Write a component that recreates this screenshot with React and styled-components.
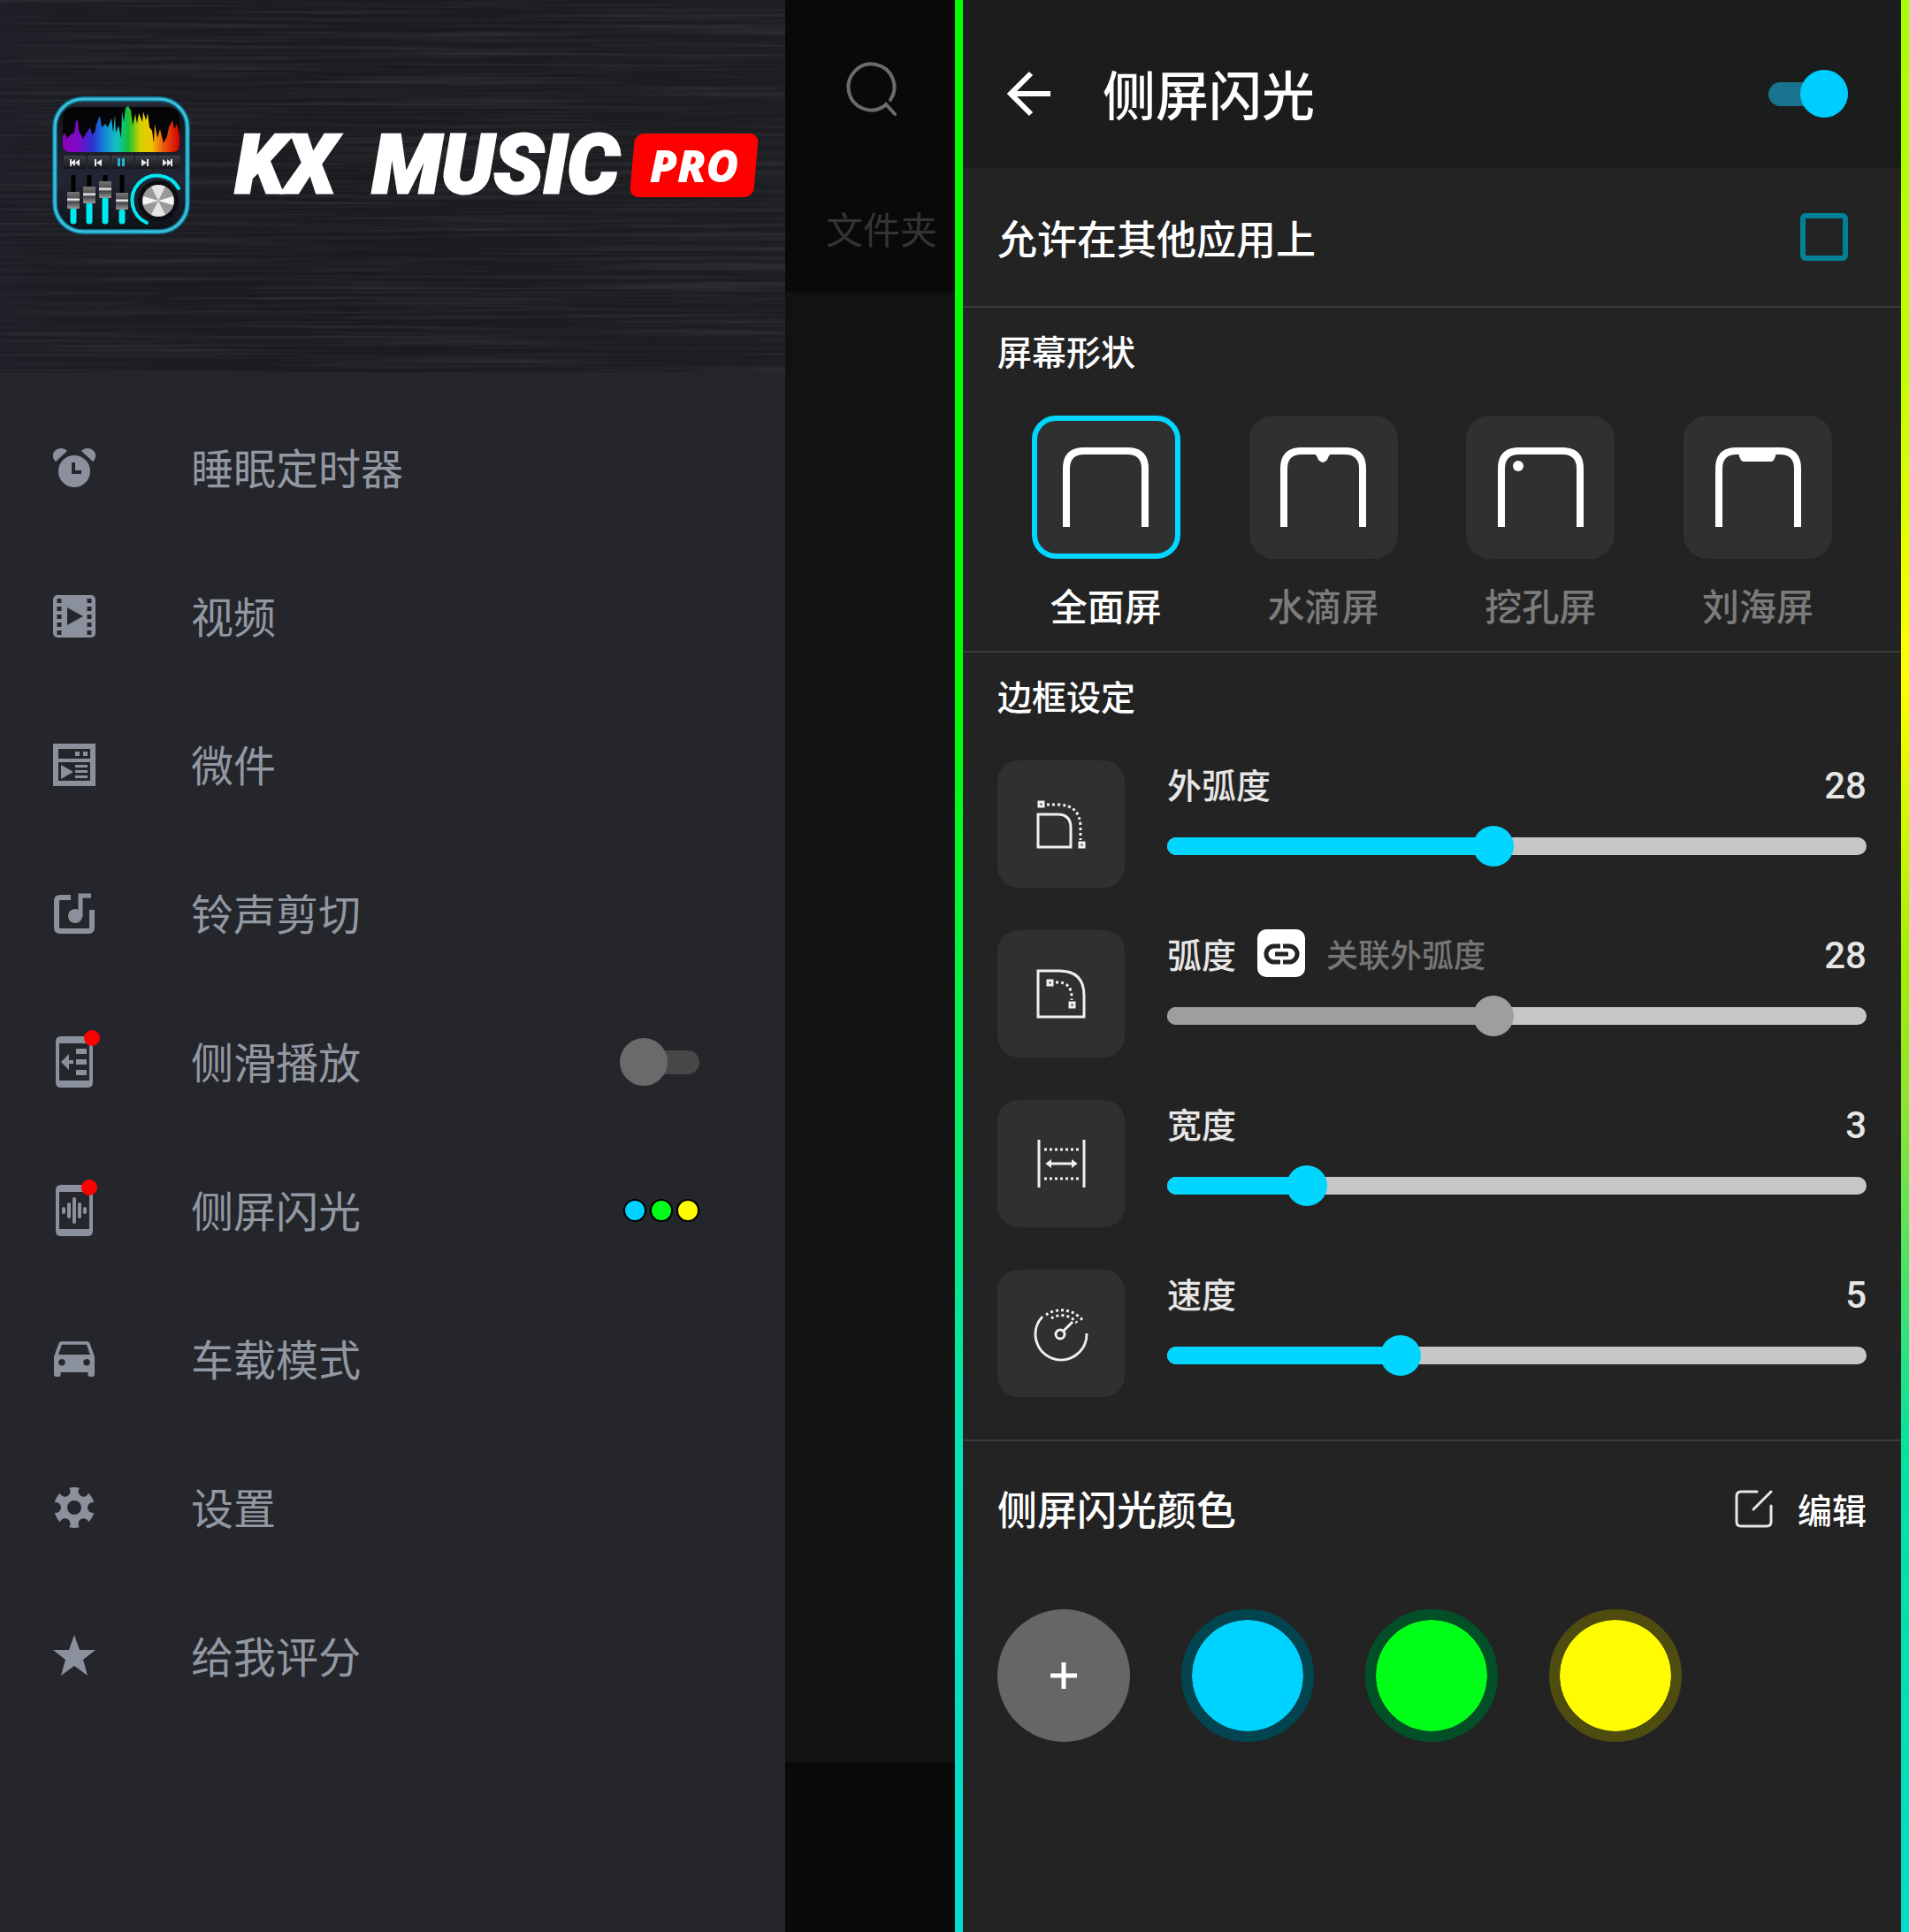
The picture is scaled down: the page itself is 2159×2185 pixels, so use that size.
import React, { useState } from 'react';
import styled, { createGlobalStyle } from 'styled-components';

const GlobalStyle = createGlobalStyle`
  * {
    box-sizing: border-box;
  }

  body {
    margin: 0;
    background-color: #232323;
    font-family: "Noto Sans CJK SC", sans-serif;
  }

  button {
    padding: 0;
    border: none;
    background: none;
    color: inherit;
    font: inherit;
    cursor: pointer;
  }

  a {
    color: inherit;
    text-decoration: none;
  }

  svg {
    display: block;
    overflow: visible;
  }
`;

const Page = styled.div`
  display: grid;
  grid-template-columns: 1080fr 1079fr;
  min-height: 100vh;
`;

const DrawerScreen = styled.div`
  display: grid;
  grid-template-columns: 37fr 8fr;
`;

/* ---------- drawer ---------- */

const Drawer = styled.aside`
  background-color: #25262b;
`;

const DrawerHeader = styled.header`
  position: relative;
  display: flex;
  align-items: center;
  height: 421px;
  padding: 0 24px 47px 60px;
  background: linear-gradient(90deg, #1d1d25, #1a1b1f 45%, #1d1e22);
  overflow: hidden;
`;

const Brushed = styled.svg`
  position: absolute;
  inset: 0;
  width: 100%;
  height: 100%;
`;

const Brand = styled.div`
  position: relative;
  display: flex;
  align-items: center;
  justify-content: space-between;
  flex: 1;
  margin: 0 9px 0 52px;
  color: #fff;
  font-style: italic;
  white-space: nowrap;
`;

const BrandName = styled.span`
  display: flex;
  gap: 41px;
  font-family: Roboto, sans-serif;
  font-size: 92px;
  font-weight: 900;
  line-height: 100px;
  -webkit-text-stroke: 3px #fff;
`;

const ProBadge = styled.span`
  position: relative;
  isolation: isolate;
  width: 140px;
  font-family: "Open Sans", sans-serif;
  font-size: 50px;
  font-weight: 800;
  line-height: 72px;
  text-align: center;

  &::before {
    content: "";
    position: absolute;
    inset: 0;
    z-index: -1;
    border-radius: 10px;
    background-color: #fe0000;
    transform: skewX(-5deg);
  }
`;

const LogoSvg = styled.svg`
  position: relative;
  flex: none;
  width: 154px;
  height: 154px;
`;

const Menu = styled.nav`
  display: flex;
  flex-direction: column;
  padding-top: 24px;
`;

const MenuRow = styled.a`
  display: flex;
  align-items: center;
  height: 168px;
  padding: 0 97px 0 60px;
  color: #9298a2;
  font-size: 48px;
  line-height: 64px;
  cursor: pointer;
`;

const MenuIcon = styled.span`
  display: flex;
  justify-content: center;
  width: 48px;
  margin-right: 108px;
  color: #8b919c;
`;

const MenuText = styled.span`
  flex: 1;
  padding-bottom: 4px;
`;

const Dots = styled.span`
  display: flex;
  gap: 4px;
`;

const Dot = styled.span`
  width: 26px;
  height: 26px;
  border: 2px solid #000;
  border-radius: 50%;
  background-color: ${(props) => props.$color};
`;

const Switch = styled.input`
  appearance: none;
  display: grid;
  align-items: center;
  width: 90px;
  height: 54px;
  margin: 0;
  cursor: pointer;

  &::before,
  &::after {
    content: "";
    grid-area: 1 / 1;
  }

  &::before {
    height: 27px;
    border-radius: 14px;
    background-color: #474747;
  }

  &::after {
    width: 54px;
    height: 54px;
    border-radius: 50%;
    background-color: #6a6a6a;
  }

  &:checked::before {
    background-color: #1b748f;
  }

  &:checked::after {
    justify-self: end;
    background-color: #00cdff;
  }
`;

/* ---------- dimmed home screen behind the drawer ---------- */

const Home = styled.main`
  display: flex;
  flex-direction: column;
  background-color: #101312;
  overflow: hidden;
`;

const HomeTop = styled.div`
  display: flex;
  flex-direction: column;
  align-items: center;
  justify-content: space-between;
  height: 331px;
  padding: 74px 0 48px;
  background-color: #090909;
`;

const HomeTab = styled.a`
  align-self: flex-end;
  margin-right: 20px;
  color: #333436;
  font-size: 42px;
  line-height: 50px;
  white-space: nowrap;
`;

const HomePlayer = styled.div`
  height: 192px;
  margin-top: auto;
  background-color: #090909;
`;

/* ---------- edge lighting screen ---------- */

const EdgeFrame = styled.div`
  padding: 0 9px;
  background:
    linear-gradient(#00ff00 36%, #00e5b8 75%, #00dcd0) left / 9px 100% no-repeat,
    linear-gradient(#a4ff00, #c4ff00 20%, #ffff00 35%, #a0f000 50%, #8de52e 57%, #00e3a0 75%, #00dcc8) right / 9px 100% no-repeat;
`;

const Settings = styled.main`
  min-height: 100%;
  background-color: #232323;
  color: #fff;
  font-weight: 500;
`;

const Toolbar = styled.header`
  display: flex;
  align-items: center;
  height: 190px;
  padding: 22px 60px 0 50px;
  background-color: #1b1d1c;
`;

const Title = styled.h1`
  flex: 1;
  margin: 0 0 0 58px;
  padding-bottom: 2px;
  font-size: 60px;
  font-weight: 500;
  line-height: 80px;
`;

const AllowRow = styled.label`
  display: flex;
  align-items: center;
  justify-content: space-between;
  height: 158px;
  padding: 0 60px 0 39px;
  border-bottom: 2px solid #3a3a3a;
  font-size: 45px;
`;

const Tick = styled.input`
  appearance: none;
  width: 54px;
  height: 54px;
  margin: 0;
  border: 6px solid #018096;
  border-radius: 6px;

  &:checked {
    background-color: #018096;
  }
`;

const Section = styled.section`
  padding: 20px 39px ${(props) => props.$bottom}px;
  border-bottom: 2px solid #3a3a3a;
`;

const SectionTitle = styled.h2`
  margin: 0 0 46px;
  font-size: 39px;
  font-weight: 500;
  line-height: 56px;
`;

const Shapes = styled.div`
  display: grid;
  grid-template-columns: repeat(4, 1fr);
`;

const ShapeButton = styled.button`
  display: flex;
  flex-direction: column;
  align-items: center;
  gap: 27px;
  color: ${(props) => (props.$active ? '#fff' : '#7b7b7b')};
  font-size: 42px;
  line-height: 50px;
`;

const ShapeTile = styled.span`
  display: flex;
  align-items: center;
  justify-content: center;
  width: 168px;
  height: 162px;
  border: 6px solid ${(props) => (props.$active ? '#00d6ff' : '#303030')};
  border-radius: 27px;
  background-color: #303030;
  color: #fff;
`;

const Rows = styled.div`
  display: flex;
  flex-direction: column;
  gap: 48px;
`;

const Row = styled.div`
  display: flex;
  gap: 48px;
`;

const RowTile = styled.span`
  flex: none;
  width: 144px;
  height: 144px;
  border-radius: 24px;
  background-color: #303030;
`;

const RowBody = styled.div`
  flex: 1;
  display: flex;
  flex-direction: column;
  gap: 22px;
`;

const RowHead = styled.div`
  display: flex;
  align-items: center;
  gap: 24px;
  height: 52px;
  color: #e6e6e6;
  font-size: 39px;
`;

const LinkButton = styled.button`
  width: 54px;
  height: 54px;
  border-radius: 10px;
  background-color: #fff;
  color: #232323;
`;

const LinkText = styled.span`
  color: #767676;
  font-size: 36px;
`;

const Value = styled.output`
  margin-left: auto;
  padding-top: 4px;
  font-family: Roboto, sans-serif;
  font-size: 42px;
`;

const SliderBox = styled.div`
  display: grid;
  align-items: center;
  height: 46px;
`;

const Track = styled.div`
  grid-area: 1 / 1;
  height: 20px;
  border-radius: 10px;
  background-color: #c7c7c7;
  overflow: hidden;
`;

const Fill = styled.div`
  height: 100%;
  background-color: ${(props) => props.$color};
`;

const Range = styled.input`
  appearance: none;
  grid-area: 1 / 1;
  height: 46px;
  margin: 0 -23px;
  background: transparent;

  &::-webkit-slider-thumb {
    appearance: none;
    width: 46px;
    height: 46px;
    border-radius: 50%;
    background-color: ${(props) => props.$color};
  }
`;

const Colors = styled.section`
  padding: 48px 39px;
`;

const ColorsHead = styled.div`
  display: flex;
  align-items: center;
  justify-content: space-between;
  margin-bottom: 86px;
  line-height: 56px;
`;

const ColorsTitle = styled.h2`
  margin: 0;
  font-size: 45px;
  font-weight: 500;
`;

const EditButton = styled.button`
  display: flex;
  align-items: center;
  gap: 28px;
  font-size: 39px;
`;

const Swatches = styled.div`
  display: flex;
  gap: 58px;
`;

const Swatch = styled.button`
  width: 150px;
  height: 150px;
  border: 12px solid ${(props) => props.$ring};
  border-radius: 50%;
  background-color: ${(props) => props.$color};
  background-clip: padding-box;
`;

const AddButton = styled.button`
  display: flex;
  align-items: center;
  justify-content: center;
  width: 150px;
  height: 150px;
  border-radius: 50%;
  background-color: #666;
`;

/* ---------- drawings ---------- */

const faders = [
  { x: 23, cap: 107, tail: 128 },
  { x: 41, cap: 101, tail: 122 },
  { x: 59, cap: 95, tail: 116 },
  { x: 78, cap: 108, tail: 130 },
];

const Logo = () => (
  <LogoSvg viewBox="0 0 154 154" role="img" aria-label="KX Music">
    <defs>
      <linearGradient id="spectrum">
        <stop offset="0" stopColor="#8a00b8" />
        <stop offset="0.14" stopColor="#7d0cc8" />
        <stop offset="0.25" stopColor="#2c2fd0" />
        <stop offset="0.36" stopColor="#1487d8" />
        <stop offset="0.46" stopColor="#12c2c4" />
        <stop offset="0.56" stopColor="#10c238" />
        <stop offset="0.66" stopColor="#d2d000" />
        <stop offset="0.76" stopColor="#f0c800" />
        <stop offset="0.86" stopColor="#ee5a10" />
        <stop offset="1" stopColor="#d00000" />
      </linearGradient>
      <linearGradient id="cap" x2="0" y2="1">
        <stop offset="0" stopColor="#777" />
        <stop offset="0.35" stopColor="#555" />
        <stop offset="0.45" stopColor="#f2f2f2" />
        <stop offset="0.6" stopColor="#444" />
        <stop offset="1" stopColor="#999" />
      </linearGradient>
      <linearGradient id="face" x2="0" y2="1">
        <stop offset="0" stopColor="#2f3644" />
        <stop offset="0.1" stopColor="#14161d" />
        <stop offset="0.6" stopColor="#232634" />
        <stop offset="1" stopColor="#0e1117" />
      </linearGradient>
      <linearGradient id="key" x2="0" y2="1">
        <stop offset="0" stopColor="#3c3f46" />
        <stop offset="1" stopColor="#15171b" />
      </linearGradient>
    </defs>
    <rect x="2" y="2" width="150" height="150" rx="32" fill="url(#face)" stroke="#0c6f88" strokeWidth="6" />
    <rect x="2" y="2" width="150" height="150" rx="32" fill="none" stroke="#3dbfdc" strokeWidth="3" />
    <path d="M11 25Q11 11 25 11H129Q143 11 143 25V54Q143 62 135 62H19Q11 62 11 54Z" fill="#050507" />
    <path
      d="M11 44L13 40L16 47L20 42L24 40L26 27L28 26L29 38L34 47L38 40L42 34L44 42L47 40L49 30L53 21L55 34L59 30L62 34L66 24L68 40L70 20L71 40L74 32L77 46L78 16L80 28L82 12L85 10L88 15L90 32L93 19L95 30L97 18L101 28L102 16L105 26L107 18L109 34L112 38L114 52L115 30L118 46L121 36L125 52L129 44L131 34L135 26L137 36L140 30L143 42V54Q143 62 135 62H19Q11 62 11 54Z"
      fill="url(#spectrum)"
    />
    {[12, 39, 66, 93, 119].map((x) => (
      <rect key={x} x={x} y="66" width="25" height="15" fill="url(#key)" />
    ))}
    <path d="M19 70h2v8h-2zM30 70v8l-5-4v4l-5-4l5-4v4zM47 70h2v8h-2zM55 70v8l-6-4zM100 70l6 4l-6 4zM106 70h2v8h-2zM124 70l5 4v-4l5 4l-5 4v-4l-5 4zM133 70h2v8h-2z" fill="#e8e8e8" />
    <path d="M73 69h3v9h-3zM78 69h3v9h-3z" fill="#22b7d0" />
    {faders.map((f) => (
      <g key={f.x}>
        <path d={`M${f.x} 88V${f.cap}`} stroke="#000" strokeWidth="5" />
        <path d={`M${f.x} ${f.tail}V140`} stroke="#00e8f0" strokeWidth="7" strokeLinecap="round" />
        <rect x={f.x - 7} y={f.cap} width="14" height="19" rx="1" fill="url(#cap)" />
      </g>
    ))}
    <circle cx="119" cy="117" r="23" fill="#0b0d12" />
    <path d="M106 142A28 28 0 1 1 142 103" fill="none" stroke="#00e8f0" strokeWidth="4" strokeLinecap="round" />
    <circle cx="119" cy="117" r="18" fill="#9a9a9a" />
    <path d="M119 117L111 101A18 18 0 0 1 127 101ZM119 117L111 133A18 18 0 0 0 127 133Z" fill="#e4e4e4" />
    <path d="M119 117L102 112A18 18 0 0 0 102 122ZM119 117L136 112A18 18 0 0 1 136 122Z" fill="#f4f4f4" />
  </LogoSvg>
);

const ClockIcon = () => (
  <svg width="48" height="44" viewBox="0 0 48 44" fill="currentColor">
    <path d="M3 15C-1 11 -1 6 2 3C6 -1 12 -1 16 3ZM45 15C49 11 49 6 46 3C42 -1 36 -1 32 3Z" />
    <circle cx="24" cy="26" r="18" />
    <path d="M23 16V27H32" fill="none" stroke="#25262b" strokeWidth="4" />
  </svg>
);

const FilmIcon = () => (
  <svg width="48" height="48" viewBox="0 0 48 48">
    <rect width="48" height="48" rx="5" fill="currentColor" />
    <path d="M16 14V34L34 24Z" fill="#25262b" />
    <path d="M7 4V46M41 4V46" stroke="#25262b" strokeWidth="5" strokeDasharray="5 4" />
  </svg>
);

const WidgetIcon = () => (
  <svg width="48" height="48" viewBox="0 0 48 48" fill="currentColor">
    <path fillRule="evenodd" d="M0 0H48V48H0ZM6 6V17H42V6ZM6 21V42H42V21Z" />
    <path d="M25 9h5v5h-5zM34 9h5v5h-5zM9 24L23 32L9 40ZM25 24h14v3h-14zM25 30h14v3h-14zM25 36h14v3h-14z" />
  </svg>
);

const RingtoneIcon = () => (
  <svg width="48" height="46" viewBox="0 0 48 46">
    <path d="M20 5H8Q4 5 4 9V39Q4 43 8 43H40Q44 43 44 39V19" fill="none" stroke="currentColor" strokeWidth="6" />
    <circle cx="25" cy="26" r="8" fill="currentColor" />
    <path d="M31 27V3H43" fill="none" stroke="currentColor" strokeWidth="5" />
  </svg>
);

const PhoneOutline = 'M6 0H36Q42 0 42 6V52Q42 58 36 58H6Q0 58 0 52V6Q0 0 6 0ZM4 8V50H38V8Z';

const SwipeIcon = () => (
  <svg width="42" height="58" viewBox="0 0 42 58" fill="currentColor">
    <path fillRule="evenodd" d={PhoneOutline} />
    <path d="M6 29L15 20V27H20V31H15V38ZM23 14h12v6h-12zM23 26h12v6h-12zM23 38h12v6h-12z" />
    <circle cx="41" cy="2" r="9" fill="#fe0000" />
  </svg>
);

const EdgeIcon = () => (
  <svg width="42" height="58" viewBox="0 0 42 58" fill="currentColor">
    <path fillRule="evenodd" d={PhoneOutline} />
    <path d="M9 27V31M15 22V36M21 16V42M27 22V36M33 27V31" stroke="currentColor" strokeWidth="4" strokeLinecap="round" />
    <circle cx="38" cy="3" r="9" fill="#fe0000" />
  </svg>
);

const CarIcon = () => (
  <svg width="46" height="40" viewBox="3 5 18 16" preserveAspectRatio="none" fill="currentColor">
    <path d="M18.92 6.01C18.72 5.42 18.16 5 17.5 5h-11c-.66 0-1.21.42-1.42 1.01L3 12v8c0 .55.45 1 1 1h1c.55 0 1-.45 1-1v-1h12v1c0 .55.45 1 1 1h1c.55 0 1-.45 1-1v-8l-2.08-5.99zM6.5 16c-.83 0-1.5-.67-1.5-1.5S5.67 13 6.5 13s1.5.67 1.5 1.5S7.33 16 6.5 16zm11 0c-.83 0-1.5-.67-1.5-1.5s.67-1.5 1.5-1.5 1.5.67 1.5 1.5-.67 1.5-1.5 1.5zM5 11l1.5-4.5h11L19 11H5z" />
  </svg>
);

const GearIcon = () => (
  <svg width="46" height="46" viewBox="-23 -23 46 46">
    <mask id="gear">
      <circle r="23" fill="#fff" />
      <circle r="8" />
      {[0, 60, 120, 180, 240, 300].map((a) => (
        <circle key={a} cx="21" r="6" transform={`rotate(${a})`} />
      ))}
    </mask>
    <rect x="-23" y="-23" width="46" height="46" fill="currentColor" mask="url(#gear)" />
  </svg>
);

const StarIcon = () => (
  <svg width="48" height="48" viewBox="0 0 48 48" fill="currentColor">
    <path d="M24 0L30 17H48L34 28L39 46L24 35L9 46L14 28L0 17H18Z" />
  </svg>
);

const SearchIcon = () => (
  <svg width="57" height="57" viewBox="0 0 57 57" fill="none" stroke="#6b6b6b" strokeWidth="4" strokeLinecap="round">
    <path d="M51 39A26 26 0 1 0 44 46L46 44L56 55" />
  </svg>
);

const BackIcon = () => (
  <svg width="50" height="50" viewBox="0 0 50 50" fill="none" stroke="#fff" strokeWidth="6">
    <path d="M49 25H4M27 2L4 25L27 48" />
  </svg>
);

const notches = {
  full: null,
  drop: <path d="M37 6Q41 8 43 14Q48 20 53 14Q55 8 59 6Z" fill="currentColor" />,
  hole: <circle cx="23" cy="21" r="6" fill="currentColor" />,
  bang: <path d="M26 6Q28 16 32 16H63Q67 16 69 6Z" fill="currentColor" />,
};

const ShapeIcon = ({ kind }) => (
  <svg width="97" height="90" viewBox="0 0 97 90">
    <path d="M4 90V24Q4 4 24 4H73Q93 4 93 24V90" fill="none" stroke="currentColor" strokeWidth="8" />
    {notches[kind]}
  </svg>
);

const rowIcons = {
  outer: (
    <>
      <path d="M46 61H68Q83 61 83 76V98H46Z" />
      <path d="M56 50H68Q94 50 94 76V90" strokeDasharray="3 3" />
      <path d="M47 47h5v5h-5zM93 93h5v5h-5z" />
    </>
  ),
  inner: (
    <>
      <path d="M46 46H70Q98 46 98 74V98H46Z" />
      <path d="M66 59H68Q84 59 84 76V79" strokeDasharray="3 3" />
      <path d="M57 57h5v5h-5zM82 82h5v5h-5z" />
    </>
  ),
  width: (
    <>
      <path d="M47 45V99M98 45V99M58 72H87" />
      <path d="M53 56H93M53 89H93" strokeDasharray="3 3" />
      <path d="M60 69L56 72L60 75ZM85 69L89 72L85 75Z" fill="#f0f0f0" strokeWidth="2" />
    </>
  ),
  speed: (
    <>
      <path d="M51 53A29 29 0 1 0 101 72" />
      <circle cx="71" cy="73" r="5" />
      <path d="M75 69L85 59" />
      <path d="M55 51A31 31 0 0 1 97 58M61 55A22 22 0 0 1 90 60" strokeDasharray="3 3" />
    </>
  ),
};

const RowIcon = ({ kind }) => (
  <svg width="144" height="144" viewBox="0 0 144 144" fill="none" stroke="#f0f0f0" strokeWidth="3">
    {rowIcons[kind]}
  </svg>
);

const LinkIcon = () => (
  <svg width="54" height="54" viewBox="0 0 54 54" fill="none" stroke="currentColor" strokeWidth="5">
    <path d="M26 19H19A9 9 0 0 0 19 37H26M29 19H36A9 9 0 0 1 36 37H29M20 28H35" />
  </svg>
);

const EditIcon = () => (
  <svg width="43" height="43" viewBox="0 0 43 43" fill="none" stroke="#e6e6e6" strokeWidth="3" strokeLinecap="round">
    <path d="M25 2H7Q2 2 2 7V36Q2 41 7 41H36Q41 41 41 36V18M41 2L21 22" />
  </svg>
);

const PlusIcon = () => (
  <svg width="30" height="30" viewBox="0 0 30 30" stroke="#fff" strokeWidth="5">
    <path d="M15 0V30M0 15H30" />
  </svg>
);

/* ---------- data ---------- */

const menu = [
  { text: '睡眠定时器', icon: <ClockIcon /> },
  { text: '视频', icon: <FilmIcon /> },
  { text: '微件', icon: <WidgetIcon /> },
  { text: '铃声剪切', icon: <RingtoneIcon /> },
  { text: '侧滑播放', icon: <SwipeIcon />, toggle: true },
  { text: '侧屏闪光', icon: <EdgeIcon />, dots: true },
  { text: '车载模式', icon: <CarIcon /> },
  { text: '设置', icon: <GearIcon /> },
  { text: '给我评分', icon: <StarIcon /> },
];

const shapes = [
  { id: 'full', text: '全面屏' },
  { id: 'drop', text: '水滴屏' },
  { id: 'hole', text: '挖孔屏' },
  { id: 'bang', text: '刘海屏' },
];

const sliders = [
  { id: 'outer', text: '外弧度', max: 60 },
  { id: 'inner', text: '弧度', max: 60 },
  { id: 'width', text: '宽度', max: 15 },
  { id: 'speed', text: '速度', max: 15 },
];

const colors = [
  { color: '#00d2ff', ring: '#024550' },
  { color: '#00ff18', ring: '#025028' },
  { color: '#fffb00', ring: '#4f4c10' },
];

const App = () => {
  const [swipe, setSwipe] = useState(false);
  const [enabled, setEnabled] = useState(true);
  const [allow, setAllow] = useState(false);
  const [shape, setShape] = useState('full');
  const [linked, setLinked] = useState(true);
  const [values, setValues] = useState({ outer: 28, inner: 28, width: 3, speed: 5 });

  const handleSlide = (id, value) => {
    setValues((prev) => {
      const next = { ...prev, [id]: value };
      if (linked && id === 'outer') next.inner = value;
      return next;
    });
  };

  return (
    <>
      <GlobalStyle />
      <Page>
        <DrawerScreen>
          <Drawer>
            <DrawerHeader>
              <Brushed aria-hidden="true">
                <filter id="brushed" x="0" y="0" width="100%" height="100%" colorInterpolationFilters="sRGB">
                  <feTurbulence type="fractalNoise" baseFrequency="0.003 0.25" numOctaves="3" seed="4" />
                  <feColorMatrix values="0 0 0 0 0.19  0 0 0 0 0.2  0 0 0 0 0.22  1.8 0 0 0 -0.76" />
                </filter>
                <rect width="100%" height="100%" filter="url(#brushed)" />
              </Brushed>
              <Logo />
              <Brand>
                <BrandName>
                  <span>KX</span> <span>MUSIC</span>
                </BrandName>
                <ProBadge>PRO</ProBadge>
              </Brand>
            </DrawerHeader>
            <Menu>
              {menu.map((item) => (
                <MenuRow
                  key={item.text}
                  as={item.toggle ? 'label' : 'a'}
                  href={item.toggle ? undefined : '#'}
                >
                  <MenuIcon>{item.icon}</MenuIcon>
                  <MenuText>{item.text}</MenuText>
                  {item.toggle && (
                    <Switch
                      type="checkbox"
                      role="switch"
                      checked={swipe}
                      onChange={(e) => setSwipe(e.target.checked)}
                    />
                  )}
                  {item.dots && (
                    <Dots>
                      {colors.map((c) => (
                        <Dot key={c.color} $color={c.color} />
                      ))}
                    </Dots>
                  )}
                </MenuRow>
              ))}
            </Menu>
          </Drawer>
          <Home>
            <HomeTop>
              <button type="button" aria-label="搜索">
                <SearchIcon />
              </button>
              <HomeTab href="#">文件夹</HomeTab>
            </HomeTop>
            <HomePlayer />
          </Home>
        </DrawerScreen>

        <EdgeFrame>
          <Settings>
            <Toolbar>
              <button type="button" aria-label="返回">
                <BackIcon />
              </button>
              <Title>侧屏闪光</Title>
              <Switch
                type="checkbox"
                role="switch"
                aria-label="侧屏闪光"
                checked={enabled}
                onChange={(e) => setEnabled(e.target.checked)}
              />
            </Toolbar>
            <AllowRow>
              允许在其他应用上
              <Tick type="checkbox" checked={allow} onChange={(e) => setAllow(e.target.checked)} />
            </AllowRow>

            <Section $bottom={27}>
              <SectionTitle>屏幕形状</SectionTitle>
              <Shapes>
                {shapes.map((s) => (
                  <ShapeButton
                    key={s.id}
                    type="button"
                    $active={s.id === shape}
                    aria-pressed={s.id === shape}
                    onClick={() => setShape(s.id)}
                  >
                    <ShapeTile $active={s.id === shape}>
                      <ShapeIcon kind={s.id} />
                    </ShapeTile>
                    {s.text}
                  </ShapeButton>
                ))}
              </Shapes>
            </Section>

            <Section $bottom={48}>
              <SectionTitle>边框设定</SectionTitle>
              <Rows>
                {sliders.map((s) => {
                  const locked = linked && s.id === 'inner';
                  const color = locked ? '#9e9e9e' : '#00d6ff';
                  return (
                    <Row key={s.id}>
                      <RowTile>
                        <RowIcon kind={s.id} />
                      </RowTile>
                      <RowBody>
                        <RowHead>
                          <label htmlFor={s.id}>{s.text}</label>
                          {s.id === 'inner' && (
                            <>
                              <LinkButton
                                type="button"
                                aria-labelledby="link-text"
                                onClick={() => setLinked(!linked)}
                              >
                                <LinkIcon />
                              </LinkButton>
                              <LinkText id="link-text">关联外弧度</LinkText>
                            </>
                          )}
                          <Value htmlFor={s.id}>{values[s.id]}</Value>
                        </RowHead>
                        <SliderBox>
                          <Track>
                            <Fill $color={color} style={{ width: `${(values[s.id] / s.max) * 100}%` }} />
                          </Track>
                          <Range
                            id={s.id}
                            type="range"
                            min="0"
                            max={s.max}
                            value={values[s.id]}
                            disabled={locked}
                            $color={color}
                            onChange={(e) => handleSlide(s.id, Number(e.target.value))}
                          />
                        </SliderBox>
                      </RowBody>
                    </Row>
                  );
                })}
              </Rows>
            </Section>

            <Colors>
              <ColorsHead>
                <ColorsTitle>侧屏闪光颜色</ColorsTitle>
                <EditButton type="button">
                  <EditIcon />
                  编辑
                </EditButton>
              </ColorsHead>
              <Swatches>
                <AddButton type="button" aria-label="添加颜色">
                  <PlusIcon />
                </AddButton>
                {colors.map((c) => (
                  <Swatch key={c.color} type="button" aria-label={c.color} $color={c.color} $ring={c.ring} />
                ))}
              </Swatches>
            </Colors>
          </Settings>
        </EdgeFrame>
      </Page>
    </>
  );
};

export default App;
